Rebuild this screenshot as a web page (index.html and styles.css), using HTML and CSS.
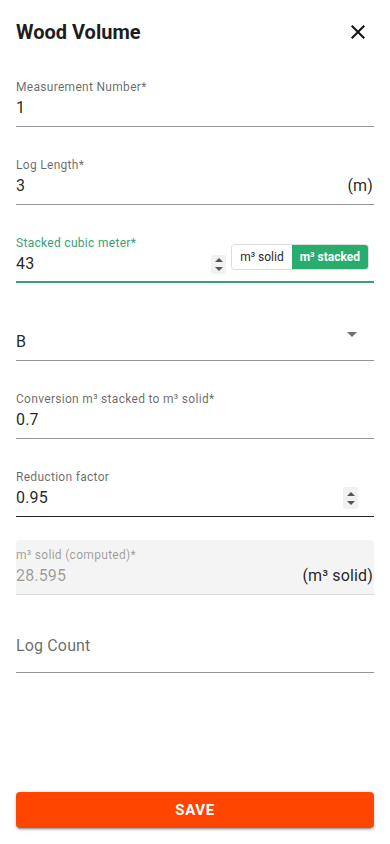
FILE: index.html
```html
<!DOCTYPE html>
<html lang="en">
<head>
  <meta charset="UTF-8">
  <meta name="viewport" content="width=device-width, initial-scale=1.0">
  <title>Wood Volume</title>
  <link rel="stylesheet" href="styles.css">
</head>
<body>

<div class="dialog">
  <header class="dialog-header">
    <h1>Wood Volume</h1>
    <button class="close-btn" aria-label="close">
      <svg viewBox="0 0 24 24" width="24" height="24"><path d="M19 6.41 17.59 5 12 10.59 6.41 5 5 6.41 10.59 12 5 17.59 6.41 19 12 13.41 17.59 19 19 17.59 13.41 12z"/></svg>
    </button>
  </header>

  <form class="form">
    <!-- Measurement number -->
    <div class="field">
      <label class="field-label">Measurement Number*</label>
      <div class="field-row">
        <input class="field-input" type="text" value="1">
      </div>
    </div>

    <div class="field">
      <label class="field-label">Log Length*</label>
      <div class="field-row">
        <input class="field-input" type="text" value="3">
        <span class="unit">(m)</span>
      </div>
    </div>

    <!-- focused field with unit toggle -->
    <div class="field field-focused">
      <label class="field-label">Stacked cubic meter*</label>
      <div class="field-row">
        <input class="field-input" type="text" value="43">
        <div class="spinner spinner-small">
          <span class="tri-up"></span>
          <span class="tri-down"></span>
        </div>
        <div class="toggle-group">
          <button type="button" class="toggle-btn">m³ solid</button>
          <button type="button" class="toggle-btn active">m³ stacked</button>
        </div>
      </div>
    </div>

    <div class="field">
      <span class="field-label"></span>
      <div class="field-row">
        <span class="field-input">B</span>
        <svg class="select-arrow" viewBox="7 10 10 5" width="10" height="5"><path d="M7 10l5 5 5-5z"/></svg>
      </div>
    </div>

    <div class="field">
      <label class="field-label">Conversion m³ stacked to m³ solid*</label>
      <div class="field-row">
        <input class="field-input" type="text" value="0.7">
      </div>
    </div>

    <div class="field field-hover">
      <label class="field-label">Reduction factor</label>
      <div class="field-row">
        <input class="field-input" type="text" value="0.95">
        <div class="spinner spinner-right">
          <span class="tri-up"></span>
          <span class="tri-down"></span>
        </div>
      </div>
    </div>

    <div class="field field-disabled">
      <label class="field-label">m³ solid (computed)*</label>
      <div class="field-row">
        <input class="field-input" type="text" value="28.595" disabled>
        <span class="unit">(m³ solid)</span>
      </div>
    </div>

    <div class="field field-empty">
      <label class="field-label">Log Count</label>
    </div>
  </form>

  <button class="save-btn">Save</button>
</div>

</body>
</html>
```

FILE: styles.css
```css
* {
  box-sizing: border-box;
}

body {
  font-family: Roboto, "Helvetica Neue", Arial, sans-serif;
  background: #fff;
  color: rgba(0, 0, 0, 0.87);
  margin: 0;
  padding: 0;
}

.dialog {
  min-height: 100vh;
  display: flex;
  flex-direction: column;
  padding: 0 16px 16px;
}

.dialog-header {
  display: flex;
  align-items: center;
  justify-content: space-between;
  padding-top: 20px;
  height: 44px;
}

.dialog-header h1 {
  margin: 0;
  font-size: 20px;
  line-height: 24px;
  font-weight: 700;
  color: #1d1d1d;
}

.close-btn {
  background: none;
  border: none;
  padding: 0;
  margin-right: 4px;
  width: 24px;
  height: 24px;
  cursor: pointer;
}

.close-btn svg {
  display: block;
  fill: #111;
}

.form {
  display: flex;
  flex-direction: column;
  gap: 31px;
  padding-top: 36px;
}

.field {
  border-bottom: 1px solid #949494;
  padding-bottom: 8px;
}

.field-label {
  display: block;
  height: 14px;
  font-size: 12px;
  line-height: 14px;
  letter-spacing: 0.3px;
  color: rgba(0, 0, 0, 0.6);
  white-space: nowrap;
}

.field-row {
  display: flex;
  align-items: flex-start;
  margin-top: 4px;
  height: 20px;
}

.field-input {
  flex: 1;
  min-width: 0;
  border: none;
  outline: none;
  background: transparent;
  padding: 0;
  margin: 0;
  font-family: inherit;
  font-size: 16px;
  line-height: 20px;
  height: 20px;
  letter-spacing: 0.15px;
  color: rgba(0, 0, 0, 0.87);
}

.unit {
  font-size: 16px;
  line-height: 20px;
  letter-spacing: 0.15px;
  color: rgba(0, 0, 0, 0.87);
  margin-right: 1px;
}

/* focused */
.field-focused {
  border-bottom: 2px solid #35a274;
  padding-bottom: 7px;
}

.field-focused .field-label {
  color: #35a274;
}

/* hovered */
.field-hover {
  border-bottom-color: #222;
}

/* native-looking number spinner */
.spinner {
  width: 15px;
  display: flex;
  flex-direction: column;
  align-items: center;
  justify-content: center;
  gap: 5px;
  background: #f1f1f1;
  border-radius: 2px;
}

.spinner-small {
  height: 19px;
  margin-top: 1px;
  margin-right: 5px;
}

.spinner-right {
  height: 22px;
  margin-top: -1px;
  margin-right: 16px;
}

.tri-up {
  width: 0;
  height: 0;
  border-left: 4px solid transparent;
  border-right: 4px solid transparent;
  border-bottom: 4px solid #555;
}

.tri-down {
  width: 0;
  height: 0;
  border-left: 4px solid transparent;
  border-right: 4px solid transparent;
  border-top: 4px solid #555;
}

.toggle-group {
  display: flex;
  height: 26px;
  margin-top: -10px;
  margin-right: 5px;
  border: 1px solid #dcdcdc;
  border-radius: 4px;
  overflow: hidden;
}

.toggle-btn {
  border: none;
  background: #fff;
  padding: 0 8px;
  font-family: inherit;
  font-size: 12px;
  line-height: 24px;
  color: #2a2a2a;
  cursor: pointer;
}

.toggle-btn.active {
  background: #28ad6c;
  color: #fff;
  font-weight: 700;
}

.select-arrow {
  display: block;
  margin-right: 17px;
  fill: #6f6f6f;
}

/* disabled computed field */
.field-disabled {
  margin-top: -8px;
  padding-top: 8px;
  background: #f4f4f4;
  border-radius: 4px 4px 0 0;
  border-bottom-color: #dadada;
}

.field-disabled .field-label {
  color: rgba(0, 0, 0, 0.38);
}

.field-disabled .field-input {
  color: rgba(0, 0, 0, 0.38);
}

/* empty field, label sits in the input line */
.field-empty {
  padding: 10px 0 16px;
}

.field-empty .field-label {
  height: 20px;
  font-size: 16px;
  line-height: 20px;
  letter-spacing: 0.15px;
}

.save-btn {
  margin-top: auto;
  height: 36px;
  width: 100%;
  background-color: #ff4500;
  color: white;
  border: none;
  border-radius: 4px;
  font-family: inherit;
  font-size: 15px;
  font-weight: 700;
  letter-spacing: 0.6px;
  text-transform: uppercase;
  box-shadow: 0 3px 1px -2px rgba(0, 0, 0, 0.2), 0 2px 2px 0 rgba(0, 0, 0, 0.14), 0 1px 5px 0 rgba(0, 0, 0, 0.12);
  cursor: pointer;
}
```
